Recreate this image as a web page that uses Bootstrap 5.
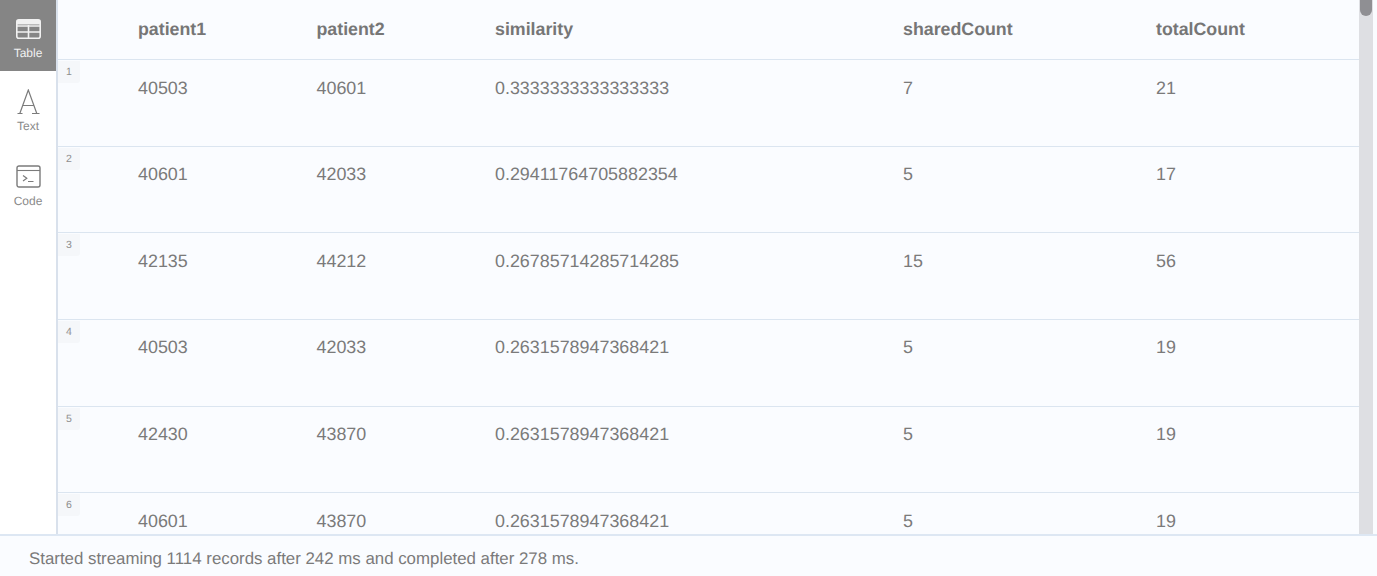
<!DOCTYPE html>
<html lang="en"><head><meta charset="utf-8"><title>Result</title>
<link href="https://cdn.jsdelivr.net/npm/bootstrap@5.3.0/dist/css/bootstrap.min.css" rel="stylesheet">
<style>
html,body{height:100%;overflow:hidden}
body{font-family:"Liberation Sans",Arial,sans-serif;background:#fafcff;color:#7a7a7a;margin:0;text-rendering:geometricPrecision}
.shell{height:576px}
.mainrow{height:534px;min-height:0}
.rail{width:58px;flex:none;background:#fff;border-right:2px solid #d9e1ec}
.railitem{color:#8a8a8a;font-size:12px;line-height:14px}
.railitem svg{display:block}
.item-table{height:71px;padding-top:19px;background:#858585;color:#f1f1f1}
.item-table svg{margin-bottom:7px}
.item-text{height:75px;padding-top:18px}
.item-text svg{margin-bottom:5px}
.item-code{height:75px;padding-top:19px}
.item-code svg{margin-bottom:5px}
.tablewrap{min-width:0;overflow:hidden;background:#fafcff}
.rtable{table-layout:fixed;width:1301px;margin:0;border-collapse:collapse}
.rtable th,.rtable td{background:#fafcff;color:#7a7a7a;font-size:17.9px;padding:0;border:0;border-bottom:1.6px solid #dbe5f0;box-shadow:none;vertical-align:top;line-height:22px;position:relative}
.rtable th{height:59.500px;font-weight:700;font-size:17.8px;padding-top:18px;color:#767676}
.rtable td{height:86.67px;padding-top:16.500px}
.rownum{position:absolute;left:0;top:1px;width:22px;height:22px;background:#f5f7fa;color:#8e8e8e;font-size:10.5px;line-height:22px;padding-left:8px;border-radius:0 0 3px 0}
.sbar{width:14px;flex:none;background:#dedfe3;position:relative}
.sthumb{position:absolute;left:1px;top:0;width:12px;height:16px;background:#8f8f93;border-radius:0 0 6px 6px}
.gutter{width:4px;flex:none}
.statusbar{height:42px;border-top:2px solid #dde7f3;background:#fafcff;padding:12px 0 0 29px;font-size:16.85px;line-height:22px;color:#7a7a7a}
</style></head>
<body>
<div class="shell d-flex flex-column">
 <div class="mainrow d-flex">
  <nav class="rail d-flex flex-column">
   <div class="railitem item-table d-flex flex-column align-items-center">
    <svg width="25" height="20" viewBox="0 0 25 20" fill="none" stroke="#f1f1f1"><rect x=".8" y=".8" width="23.400" height="18.400" rx="2" stroke-width="1.6"/><path d="M1 1h23v4.500H1z" fill="#f1f1f1" stroke="none"/><path d="M1 7h23M1 13h23M12.500 6v13" stroke-width="1.6"/></svg>
    <span>Table</span></div>
   <div class="railitem item-text d-flex flex-column align-items-center">
    <svg width="23" height="25" viewBox="0 0 23 25" fill="none" stroke="#7b7b7b"><path d="M.5 24.500h5M15 24.500h7.500M2.800 24.500 11.300 1l8.500 23.500M5.500 16.500h11.500" stroke-width="1.200"/></svg>
    <span>Text</span></div>
   <div class="railitem item-code d-flex flex-column align-items-center">
    <svg width="25" height="24" viewBox="0 0 25 24" fill="none" stroke="#7b7b7b"><rect x="1" y="1" width="23" height="21" rx="2" stroke-width="1.4"/><path d="M1 5.500h23" stroke-width="1.1"/><path d="m7 10.500 3.800 2.800L7 16M12 16.500h5.500" stroke-width="1.2"/></svg>
    <span>Code</span></div>
  </nav>
  <div class="tablewrap flex-grow-1">
   <table class="table rtable">
    <colgroup><col style="width:80px"><col style="width:178.500px"><col style="width:178.500px"><col style="width:408px"><col style="width:253px"><col></colgroup>
    <thead><tr><th></th><th>patient1</th><th>patient2</th><th>similarity</th><th>sharedCount</th><th>totalCount</th></tr></thead>
    <tbody>
     <tr><td><span class="rownum">1</span></td><td>40503</td><td>40601</td><td>0.3333333333333333</td><td>7</td><td>21</td></tr>
     <tr><td><span class="rownum">2</span></td><td>40601</td><td>42033</td><td>0.29411764705882354</td><td>5</td><td>17</td></tr>
     <tr><td><span class="rownum">3</span></td><td>42135</td><td>44212</td><td>0.26785714285714285</td><td>15</td><td>56</td></tr>
     <tr><td><span class="rownum">4</span></td><td>40503</td><td>42033</td><td>0.2631578947368421</td><td>5</td><td>19</td></tr>
     <tr><td><span class="rownum">5</span></td><td>42430</td><td>43870</td><td>0.2631578947368421</td><td>5</td><td>19</td></tr>
     <tr><td><span class="rownum">6</span></td><td>40601</td><td>43870</td><td>0.2631578947368421</td><td>5</td><td>19</td></tr>
    </tbody>
   </table>
  </div>
  <div class="sbar"><div class="sthumb"></div></div>
  <div class="gutter"></div>
 </div>
 <div class="statusbar">Started streaming 1114 records after 242 ms and completed after 278 ms.</div>
</div>
<script src="https://cdn.jsdelivr.net/npm/bootstrap@5.3.0/dist/js/bootstrap.bundle.min.js"></script>
</body></html>
